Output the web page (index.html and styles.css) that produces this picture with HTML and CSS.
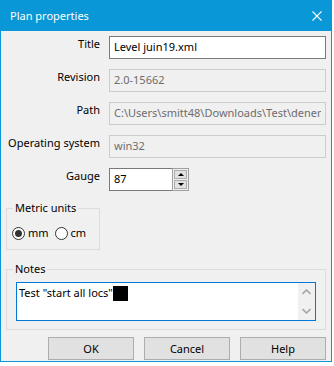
FILE: index.html
```html
<!DOCTYPE html>
<html lang="en">
<head>
  <meta charset="UTF-8" />
  <title>Plan properties</title>
  <link rel="stylesheet" href="styles.css">
</head>
<body>

  <div class="dialog">
    <div class="titlebar">
      <span class="caption">Plan properties</span>
      <svg class="close-icon" width="10" height="10" viewBox="0 0 10 10">
        <path d="M0.5 0.5 L9.5 9.5 M9.5 0.5 L0.5 9.5" stroke="#fff" stroke-width="1.1" fill="none"/>
      </svg>
    </div>

    <div class="content">
      <div class="form">
        <label>Title</label>
        <input type="text" class="field" value="Level juin19.xml" />

        <label>Revision</label>
        <input type="text" class="field readonly" value="2.0-15662" readonly />

        <label>Path</label>
        <input type="text" class="field readonly" value="C:\Users\smitt48\Downloads\Test\deneme.xml" readonly />

        <label>Operating system</label>
        <input type="text" class="field readonly" value="win32" readonly />

        <label>Gauge</label>
        <div class="spin-field">
          <input type="text" class="field gauge" value="87" />
          <div class="spin">
            <button class="spin-btn"><span class="tri up"></span></button>
            <button class="spin-btn"><span class="tri down"></span></button>
          </div>
        </div>
      </div>

      <fieldset class="group units">
        <legend>Metric units</legend>
        <div class="radio-row">
          <label class="radio"><span class="dot checked"></span>mm</label>
          <label class="radio"><span class="dot"></span>cm</label>
        </div>
      </fieldset>

      <fieldset class="group notes">
        <legend>Notes</legend>
        <div class="notes-inner">
          <div class="notes-box">
            <div class="notes-text">Test "start all locs"<span class="caret"></span></div>
            <div class="scrollbar">
              <svg width="9" height="6" viewBox="0 0 9 6"><path d="M0.5 5 L4.5 1 L8.5 5" stroke="#a6a6a6" stroke-width="1.6" fill="none"/></svg>
              <svg width="9" height="6" viewBox="0 0 9 6"><path d="M0.5 1 L4.5 5 L8.5 1" stroke="#a6a6a6" stroke-width="1.6" fill="none"/></svg>
            </div>
          </div>
        </div>
      </fieldset>

      <div class="actions">
        <button class="btn">OK</button>
        <button class="btn">Cancel</button>
        <button class="btn">Help</button>
      </div>
    </div>
  </div>

</body>
</html>
```

FILE: styles.css
```css
body {
  margin: 0;
  background: #fff;
  font-family: 'Noto Sans', sans-serif;
  font-size: 11px;
  color: #000;
}

.dialog {
  width: 330px;
  height: 360px;
  border: 1px solid #0997d7;
  background: #f0f0f0;
  display: flex;
  flex-direction: column;
}

.titlebar {
  height: 30px;
  flex-shrink: 0;
  background: #0997d7;
  color: #fff;
  display: flex;
  align-items: center;
  justify-content: space-between;
  padding: 0 9px 0 9px;
}

.caption {
  line-height: 16px;
  margin-top: -1px;
}

.close-icon {
  display: block;
}

.content {
  padding: 5px 5px 0 5px;
}

.form {
  display: grid;
  grid-template-columns: 94px 1fr;
  column-gap: 9px;
  row-gap: 10px;
}

.form label {
  text-align: right;
  line-height: 16px;
}

.field {
  box-sizing: border-box;
  height: 23px;
  width: 100%;
  margin: 0;
  border: 1px solid #7a7a7a;
  background: #fff;
  padding: 0 4px 2px 4px;
  font-family: inherit;
  font-size: 11px;
  color: #000;
  outline: none;
}

.field.readonly {
  background: #f0f0f0;
  border-color: #cccccc;
  color: #6d6d6d;
}

.spin-field {
  display: flex;
  height: 23px;
}

.field.gauge {
  width: 64px;
}

.spin {
  box-sizing: border-box;
  width: 17px;
  height: 23px;
  margin-left: -1px;
  border: 1px solid #a0a0a0;
  background: #f0f0f0;
  display: flex;
  flex-direction: column;
  gap: 1px;
  padding: 1px;
}

.spin-btn {
  flex: 1;
  margin: 0;
  padding: 0;
  border: 1px solid #adadad;
  background: #e1e1e1;
  display: flex;
  align-items: center;
  justify-content: center;
}

.tri {
  width: 0;
  height: 0;
  border-left: 3px solid transparent;
  border-right: 3px solid transparent;
}

.tri.up {
  border-bottom: 3px solid #000;
}

.tri.down {
  border-top: 3px solid #000;
}

.group {
  box-sizing: border-box;
  margin: 0;
  padding: 0;
  border: 1px solid #dcdcdc;
  min-width: 0;
}

.group legend {
  line-height: 16px;
  padding: 0 2px;
  margin-left: 6px;
}

.units {
  width: 94px;
  margin-top: 9px;
}

.radio-row {
  display: flex;
  align-items: center;
  line-height: 16px;
  padding: 9px 0 8px 5px;
}

.radio {
  display: flex;
  align-items: center;
  gap: 3px;
  margin-right: 6px;
}

.dot {
  box-sizing: border-box;
  width: 13px;
  height: 13px;
  border: 1px solid #333;
  border-radius: 50%;
  background: #fff;
  display: flex;
  align-items: center;
  justify-content: center;
}

.dot.checked::after {
  content: '';
  width: 7px;
  height: 7px;
  border-radius: 50%;
  background: #333;
}

.notes {
  margin-top: 11px;
}

.notes-inner {
  padding: 5px 9px 8px 9px;
}

.notes-box {
  box-sizing: border-box;
  height: 39px;
  border: 1px solid #0078d7;
  background: #fff;
  display: flex;
}

.notes-text {
  flex: 1;
  padding: 2px 2px;
  line-height: 16px;
  white-space: pre;
}

.caret {
  display: inline-block;
  width: 15px;
  height: 15px;
  background: #000;
  vertical-align: -4px;
}

.scrollbar {
  width: 17px;
  background: #f0f0f0;
  display: flex;
  flex-direction: column;
  align-items: center;
  justify-content: space-between;
  padding: 6px 0 6px 0;
}

.actions {
  display: flex;
  justify-content: flex-end;
  gap: 10px;
  margin-top: 7px;
}

.btn {
  width: 86px;
  height: 23px;
  margin: 0;
  padding: 0;
  border: 1px solid #adadad;
  background: #e1e1e1;
  font-family: inherit;
  font-size: 11px;
  color: #000;
}
```
